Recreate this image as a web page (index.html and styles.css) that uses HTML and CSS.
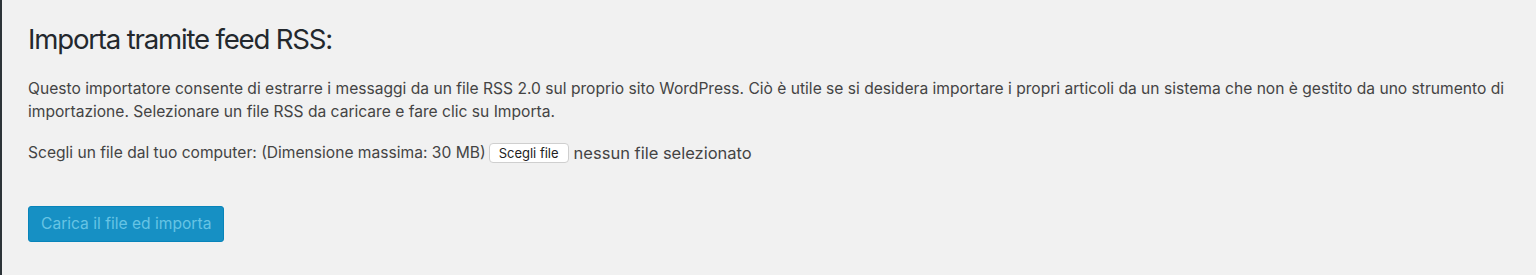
FILE: index.html
```html
<!DOCTYPE html>
<html lang="it">
<head>
<meta charset="utf-8">
<link rel="stylesheet" href="styles.css">
</head>
<body>
<div class="frame">
  <div class="wrap">
    <h2 class="title">Importa tramite feed RSS:</h2>
    <p class="intro">Questo importatore consente di estrarre i messaggi da un file RSS 2.0 sul proprio sito WordPress. Ciò è utile se si desidera importare i propri articoli da un sistema che non è gestito da uno strumento di importazione. Selezionare un file RSS da caricare e fare clic su Importa.</p>
    <div class="upload">
      <label class="upload-label">Scegli un file dal tuo computer: (Dimensione massima: 30 MB)</label>
      <span class="file-btn">Scegli file</span>
      <span class="file-name">nessun file selezionato</span>
    </div>
    <div class="submit">
      <button class="primary" disabled>Carica il file ed importa</button>
    </div>
  </div>
</div>
</body>
</html>
```
FILE: styles.css
```css
html, body {
  margin: 0;
  padding: 0;
  background: #f1f1f1;
}
.frame {
  border-left: 2px solid #2c3338;
  min-height: 275px;
  box-sizing: border-box;
}
.wrap {
  padding: 21px 20px 0 26px;
  font-family: Inter, "Noto Sans", sans-serif;
  color: #3c434a;
}
.title {
  margin: 0;
  font-size: 27.6px;
  font-weight: 400;
  line-height: 36px;
  letter-spacing: -1.2px;
  color: #23282d;
}
.intro {
  margin: 20px 0 0 0;
  font-size: 15.6px;
  line-height: 23.4px;
  color: #444;
}
.upload {
  margin-top: 19px;
  display: flex;
  align-items: center;
  font-size: 15.6px;
  color: #444;
}
.file-btn {
  margin-left: 3px;
  font-size: 13px;
  line-height: 18px;
  padding: 0 9px;
  background: #fff;
  border: 1px solid #cfcfcf;
  border-radius: 4px;
  color: #222;
}
.file-name {
  margin-left: 5px;
  font-size: 16.5px;
  color: #444;
}
.submit {
  margin-top: 43px;
}
.primary {
  font-family: Inter, "Noto Sans", sans-serif;
  font-size: 15.6px;
  height: 36px;
  padding: 0 12px;
  border: 1px solid #0884ba;
  border-radius: 3px;
  background: #1690c4;
  color: #66c4e4;
}
```
